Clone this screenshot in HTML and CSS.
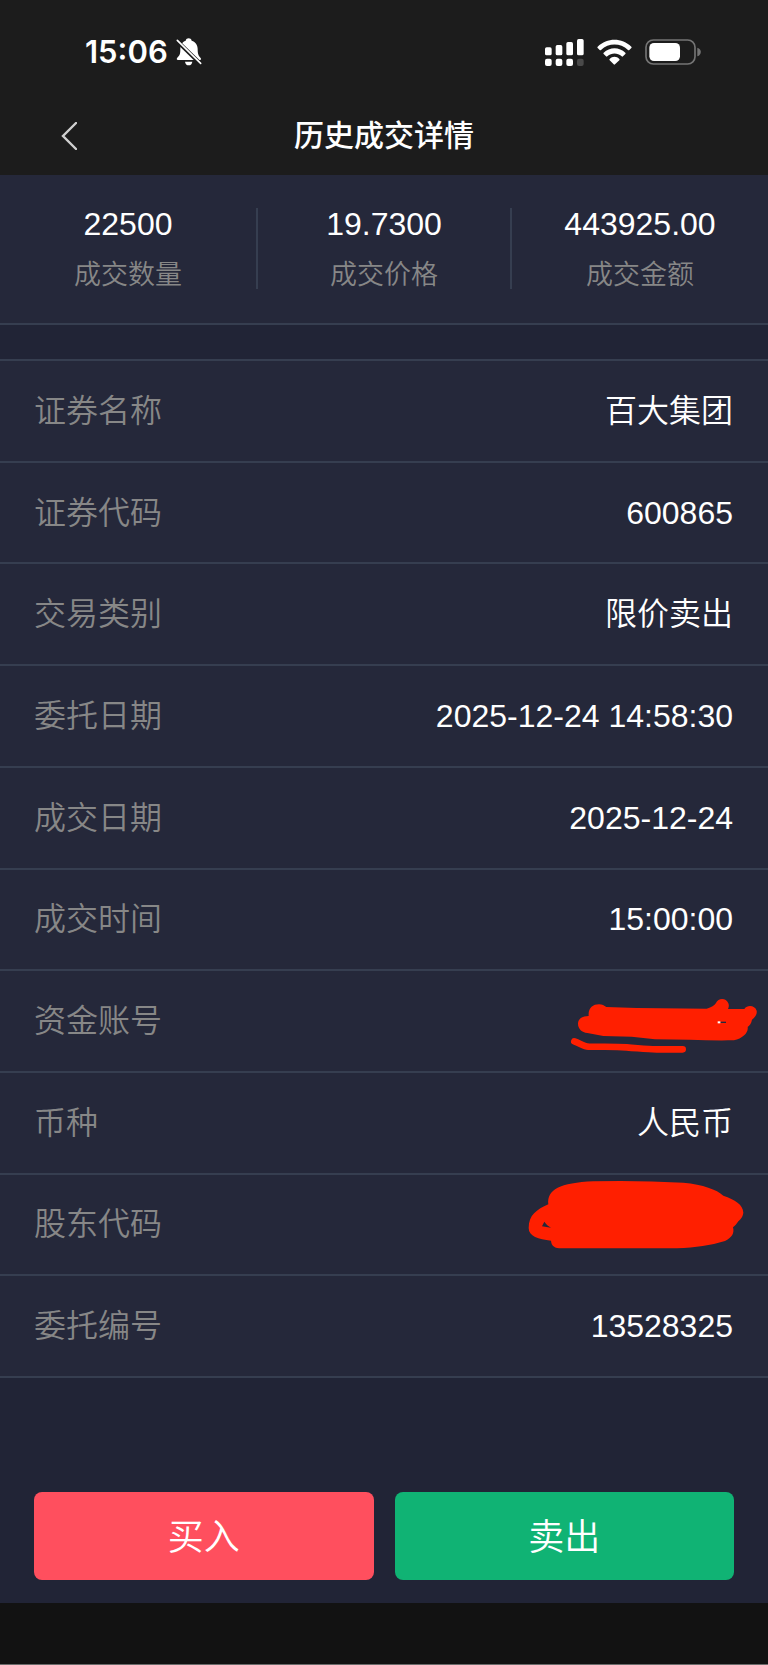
FILE: index.html
```html
<!DOCTYPE html>
<html lang="zh-CN">
<head>
    <meta charset="UTF-8">
    <meta name="viewport" content="width=device-width, initial-scale=1.0">
    <title>历史成交详情</title>
    <link rel="stylesheet" href="styles.css">
</head>
<body>
    <!-- Status bar -->
    <div class="status-bar">
        <div class="status-left">
            <span class="time">15:06</span>
            <svg class="bell" viewBox="0 0 78 84" width="26" height="28" fill="#fff">
                <path d="M29 8c1-5 5-7 9-7s8 2 9 7c12 4 18 14 18 26 0 16 3 20 9 26 2 3 1 6-2 6H6c-4 0-5-4-2-7 6-6 9-9 9-25 0-12 5-22 16-26z"/>
                <path d="M27 71h22c-1 7-5 11-11 11s-10-4-11-11z"/>
                <path d="M-2 4L78 82" stroke="#1c1c1c" stroke-width="12"/>
                <path d="M4 7L74 76" stroke="#fff" stroke-width="5" stroke-linecap="round"/>
            </svg>
        </div>
        <div class="status-right">
            <svg viewBox="0 0 117 81" width="39" height="27" fill="#fff">
                <rect x="0" y="25" width="20" height="24" rx="5"/>
                <rect x="32" y="18" width="20" height="31" rx="5"/>
                <rect x="64" y="9" width="20" height="40" rx="5"/>
                <rect x="96" y="0" width="20" height="49" rx="5"/>
                <rect x="0" y="59" width="20" height="22" rx="6"/>
                <rect x="32" y="59" width="20" height="22" rx="6"/>
                <rect x="64" y="59" width="20" height="22" rx="6"/>
                <rect x="96" y="59" width="20" height="22" rx="6" fill="#4a4a4a"/>
            </svg>
            <svg viewBox="0 0 105 78" width="35" height="26" fill="#fff">
                <path d="M2 23C30-5 75-5 103 23q2 2 0 4l-6 6q-2 2-4 0C70 11 35 11 12 33q-2 2-4 0l-6-6q-2-2 0-4z"/>
                <path d="M20 41C38 23 67 23 85 41q2 2 0 4l-7 7q-2 2-4 0C61 41 44 41 31 52q-2 2-4 0l-7-7q-2-2 0-4z"/>
                <path d="M38 60c8-9 21-9 29 0q2 2 0 4L54 76q-2 2-4 0L38 64q-2-2 0-4z"/>
            </svg>
            <svg viewBox="0 0 168 78" width="56" height="26">
                <rect x="3" y="3" width="147" height="72" rx="22" fill="none" stroke="#747474" stroke-width="5"/>
                <rect x="13" y="12" width="92" height="54" rx="14" fill="#fff"/>
                <path d="M157 26c14 4 14 22 0 26z" fill="#747474"/>
            </svg>
        </div>
    </div>

    <!-- Title bar -->
    <header class="header">
        <button class="back" type="button" aria-label="返回">
            <svg viewBox="0 0 16 28" width="16" height="28" fill="none" stroke="#d0d0d0" stroke-width="2.4" stroke-linecap="round">
                <path d="M15 1L2 14l13 13"/>
            </svg>
        </button>
        <h1>历史成交详情</h1>
    </header>

    <main>
        <section class="summary">
            <div class="summary-item">
                <div class="number">22500</div>
                <div class="caption">成交数量</div>
            </div>
            <div class="summary-item middle">
                <div class="number">19.7300</div>
                <div class="caption">成交价格</div>
            </div>
            <div class="summary-item">
                <div class="number">443925.00</div>
                <div class="caption">成交金额</div>
            </div>
        </section>

        <dl class="details">
            <div class="row"><dt>证券名称</dt><dd>百大集团</dd></div>
            <div class="row"><dt>证券代码</dt><dd>600865</dd></div>
            <div class="row"><dt>交易类别</dt><dd>限价卖出</dd></div>
            <div class="row"><dt>委托日期</dt><dd>2025-12-24 14:58:30</dd></div>
            <div class="row"><dt>成交日期</dt><dd>2025-12-24</dd></div>
            <div class="row"><dt>成交时间</dt><dd>15:00:00</dd></div>
            <div class="row">
                <dt>资金账号</dt>
                <dd>
                    <svg class="scribble scribble-account" viewBox="24 48 576 180" width="192" height="60" fill="#ff1f00">
                        <path d="M54 131C54 117 66 108 86 108C84 84 98 73 117 73C127 73 132 77 139 81L230 84L440 86C455 81 463 77 468 69C475 52 499 53 505 70C508 77 506 83 504 87L553 87C563 73 585 77 590 92C592 104 584 112 576 119C574 130 569 136 563 141C566 158 548 175 522 181C450 183 370 178 285 178L215 170L130 168L82 159C66 157 54 147 54 131z"/>
                        <path d="M43 184C60 190 72 199 85 200C120 201 160 199 200 202S260 208 290 208H368" fill="none" stroke="#ff1f00" stroke-width="20" stroke-linecap="round" stroke-linejoin="round"/>
                        <path d="M481 125h17v4h-17z" fill="#25283a"/>
                        <path d="M473 124h8v6h-8z" fill="#fff"/>
                    </svg>
                </dd>
            </div>
            <div class="row"><dt>币种</dt><dd>人民币</dd></div>
            <div class="row">
                <dt>股东代码</dt>
                <dd>
                    <svg class="scribble scribble-holder" viewBox="48 54 660 222" width="220" height="74" fill="#ff1f00">
                        <path d="M115 133C110 90 150 68 250 64Q385 61 520 68C580 74 620 88 640 107C675 119 699 133 700 158C698 173 690 179 685 184C680 192 675 197 669 202C674 220 665 234 645 243C600 256 560 263 500 265H155C134 265 124 258 123 242C85 238 56 229 56 204C56 165 80 149 115 133z"/>
                        <path d="M103 185C108 193 115 198 123 203L96 199z" fill="#25283a"/>
                    </svg>
                </dd>
            </div>
            <div class="row"><dt>委托编号</dt><dd>13528325</dd></div>
        </dl>

        <div class="actions">
            <button class="button buy" type="button">买入</button>
            <button class="button sell" type="button">卖出</button>
        </div>
    </main>

    <footer class="home-area"></footer>
</body>
</html>
```

FILE: styles.css
```css
* {
    box-sizing: border-box;
}
body {
    margin: 0;
    min-height: 100vh;
    display: flex;
    flex-direction: column;
    font-family: "Liberation Sans", "Noto Sans CJK SC", sans-serif;
    font-size: 32px;
    line-height: 36px;
    font-weight: 350;
    color: #fff;
    background-color: #212436;
}
svg {
    display: block;
}

/* Status bar */
.status-bar {
    display: flex;
    justify-content: space-between;
    align-items: center;
    height: 96px;
    padding: 8px 67px 0 85px;
    background-color: #1c1c1c;
}
.status-left {
    display: flex;
    align-items: center;
    gap: 8px;
}
.status-right {
    display: flex;
    align-items: center;
    gap: 13px;
}
.time {
    font-family: Inter, sans-serif;
    font-size: 31px;
    font-weight: 600;
}

/* Title bar */
.header {
    position: relative;
    display: flex;
    align-items: center;
    justify-content: center;
    height: 79px;
    background-color: #1c1c1c;
}
.header h1 {
    margin: 0;
    font-size: 30px;
    font-weight: 500;
}
.back {
    position: absolute;
    left: 45px;
    padding: 16px;
    border: 0;
    background: none;
    cursor: pointer;
}

main {
    flex: 1;
    display: flex;
    flex-direction: column;
}

/* Totals */
.summary {
    display: grid;
    grid-template-columns: repeat(3, 1fr);
    padding: 33px 0 34px;
    margin-bottom: 34px;
    text-align: center;
    background-color: #25283a;
    border-bottom: 2px solid #363e50;
}
.middle {
    border-left: 2px solid #363e50;
    border-right: 2px solid #363e50;
}
.number {
    line-height: 32px;
}
.caption {
    margin-top: 22px;
    font-size: 27px;
    line-height: 27px;
    color: #878787;
}

/* Detail list, rows share the free height */
.details {
    flex: 1;
    display: flex;
    flex-direction: column;
    margin: 0;
    background-color: #25283a;
    border-top: 2px solid #363e50;
}
.row {
    position: relative;
    flex: 1;
    display: flex;
    align-items: center;
    justify-content: space-between;
    min-height: 64px;
    padding: 0 35px 0 34px;
    border-bottom: 2px solid #363e50;
}
.row dt {
    color: #878787;
}
.row dd {
    margin: 0;
}
.scribble {
    position: absolute;
}
.scribble-account {
    top: 25px;
    right: 8px;
}
.scribble-holder {
    top: 3px;
    right: 22px;
}

/* Buttons */
.actions {
    display: flex;
    gap: 21px;
    padding: 114px 34px 23px;
}
.button {
    flex: 1;
    height: 88px;
    padding: 4px 0 0;
    border: 0;
    border-radius: 8px;
    font-family: inherit;
    font-size: 36px;
    line-height: 36px;
    font-weight: 350;
    color: #fff;
    cursor: pointer;
}
.buy {
    background-color: #ff4f5e;
}
.sell {
    background-color: #10b374;
}

.home-area {
    height: 62px;
    background-color: #121212;
    border-bottom: 1px solid #6b6b6b;
}
```
